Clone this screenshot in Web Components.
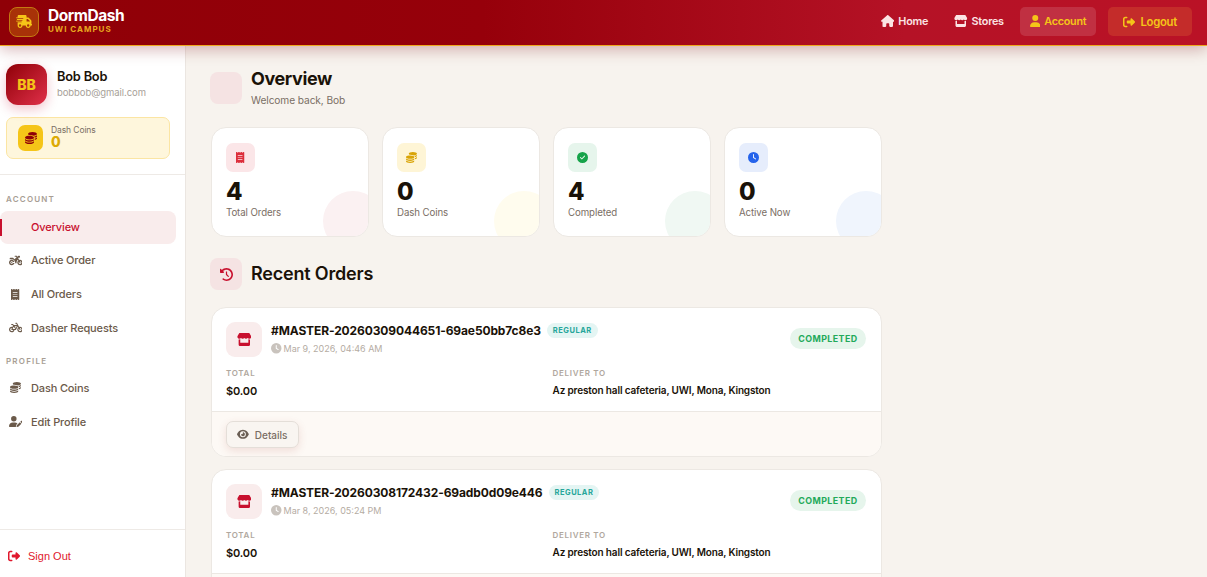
<!DOCTYPE html>
<html lang="en">
<head>
<meta charset="utf-8">
<title>DormDash</title>
<style>
  html, body { margin: 0; height: 100%; overflow: hidden; }
  body { font-family: Inter, "Noto Sans", sans-serif; color: #1a1208; background: #f7f3ee; }
</style>
</head>
<body>
<dd-app></dd-app>
<script>
const ICONS = {
  house: [576, 'M575.8 255.5c0 18-15 32.1-32 32.1h-32l.7 160.2c0 2.7-.2 5.4-.5 8.1V472c0 22.1-17.9 40-40 40H456c-1.1 0-2.2 0-3.3-.1c-1.4 .1-2.8 .1-4.2 .1H416 392c-22.1 0-40-17.9-40-40V448 384c0-17.7-14.3-32-32-32H256c-17.7 0-32 14.3-32 32v64 24c0 22.1-17.9 40-40 40H160 128.1c-1.5 0-3-.1-4.5-.2c-1.2 .1-2.4 .2-3.6 .2H104c-22.1 0-40-17.9-40-40V360c0-.9 0-1.9 .1-2.8V287.6H32c-18 0-32-14-32-32.1c0-9 3-17 10-24L266.4 8c7-7 15-8 22-8s15 2 21 7L564.8 231.5c8 7 12 15 11 24z'],
  store: [576, 'M547.6 103.8L490.3 13.1C485.2 5 476.1 0 466.4 0H109.6C99.9 0 90.8 5 85.7 13.1L28.3 103.8c-29.6 46.8-3.4 111.9 51.9 119.4c4 .5 8.1 .8 12.1 .8c26.1 0 49.3-11.4 65.2-29c15.9 17.6 39.1 29 65.2 29c26.1 0 49.3-11.4 65.2-29c15.9 17.6 39.1 29 65.2 29c26.2 0 49.3-11.4 65.2-29c16 17.6 39.1 29 65.2 29c4.1 0 8.1-.3 12.1-.8c55.5-7.4 81.8-72.5 52.1-119.4zM499.7 254.9l-.1 0c-5.3 .7-10.7 1.1-16.2 1.1c-12.4 0-24.3-1.9-35.4-5.3V384H128V250.6c-11.2 3.5-23.2 5.4-35.6 5.4c-5.5 0-11-.4-16.3-1.1l-.1 0c-4.1-.6-8.1-1.3-12-2.3V384v64c0 35.3 28.7 64 64 64H448c35.3 0 64-28.7 64-64V384 252.6c-4 1-8 1.8-12.3 2.3z'],
  user: [448, 'M224 256A128 128 0 1 0 224 0a128 128 0 1 0 0 256zm-45.7 48C79.8 304 0 383.8 0 482.3C0 498.7 13.3 512 29.7 512H418.3c16.4 0 29.7-13.3 29.7-29.7C448 383.8 368.2 304 269.7 304H178.3z'],
  signout: [512, 'M377.9 105.9L500.7 228.7c7.2 7.2 11.3 17.1 11.3 27.3s-4.1 20.1-11.3 27.3L377.9 406.1c-6.4 6.4-15 9.9-24 9.9c-18.7 0-33.9-15.2-33.9-33.9l0-62.1-128 0c-17.7 0-32-14.3-32-32l0-64c0-17.7 14.3-32 32-32l128 0 0-62.1c0-18.7 15.2-33.9 33.9-33.9c9 0 17.6 3.6 24 9.9zM160 96L96 96c-17.7 0-32 14.3-32 32l0 256c0 17.7 14.3 32 32 32l64 0c17.7 0 32 14.3 32 32s-14.3 32-32 32l-64 0c-53 0-96-43-96-96L0 128C0 75 43 32 96 32l64 0c17.7 0 32 14.3 32 32s-14.3 32-32 32z'],
  coins: [512, 'M512 80c0 18-14.3 34.6-38.4 48c-29.1 16.1-72.5 27.5-122.3 30.9c-3.7-1.8-7.4-3.5-11.3-5C300.6 137.4 248.2 128 192 128c-8.3 0-16.4 .2-24.5 .6l-1.1-.6C142.3 114.6 128 98 128 80c0-44.2 86-80 192-80S512 35.8 512 80zM160.7 161.1c10.2-.7 20.7-1.1 31.3-1.1c62.2 0 117.4 12.3 152.5 31.4C369.3 204.9 384 221.7 384 240c0 4-.7 7.9-2.1 11.7c-4.6 13.2-17 25.3-35 35.5c0 0 0 0 0 0c-.1 .1-.3 .1-.4 .2l0 0 0 0c-.3 .2-.6 .3-.9 .5c-35 19.4-90.8 32-153.6 32c-59.6 0-112.9-11.3-148.2-29.1c-1.9-.9-3.7-1.9-5.5-2.9C14.3 274.6 0 258 0 240c0-34.8 53.4-64.5 128-75.4c10.5-1.5 21.4-2.7 32.7-3.5zM416 240c0-21.9-10.6-39.9-24.1-53.4c28.3-4.4 54.2-11.4 76.2-20.5c16.3-6.8 31.5-15.2 43.9-25.5V176c0 19.3-16.5 37.1-43.8 50.9c-14.6 7.4-32.4 13.7-52.4 18.5c.1-1.8 .2-3.5 .2-5.3zm-32 96c0 18-14.3 34.6-38.4 48c-1.8 1-3.6 1.9-5.5 2.9C304.9 404.7 251.6 416 192 416c-62.8 0-118.6-12.6-153.6-32C14.3 370.6 0 354 0 336V300.6c12.5 10.3 27.6 18.7 43.9 25.5C83.4 342.6 135.8 352 192 352s108.6-9.4 148.1-25.9c7.8-3.2 15.3-6.9 22.4-10.9c6.1-3.4 11.8-7.2 17.2-11.2c1.5-1.1 2.9-2.3 4.3-3.4V304v5.7V336zm32 0V304 278.1c19-4.2 36.5-9.5 52.1-16c16.3-6.8 31.5-15.2 43.9-25.5V272c0 10.5-5 21-14.9 30.9c-16.3 16.3-45 29.7-81 38.4c.1-1.7 .2-3.5 .2-5.3zM192 448c56.2 0 108.6-9.4 148.1-25.9c16.3-6.8 31.5-15.2 43.9-25.5V432c0 44.2-86 80-192 80S0 476.2 0 432V396.6c12.5 10.3 27.6 18.7 43.9 25.5C83.4 438.6 135.8 448 192 448z'],
  receipt: [384, 'M14 2.2C22.5-1.7 32.5-.3 39.6 5.8L80 40.4 120.4 5.8c9-7.7 22.3-7.7 31.2 0L192 40.4 232.4 5.8c9-7.7 22.2-7.7 31.2 0L304 40.4 344.4 5.8c7.1-6.1 17.1-7.5 25.6-3.6s14 12.4 14 21.8V488c0 9.4-5.5 17.9-14 21.8s-18.5 2.5-25.6-3.6L304 471.6l-40.4 34.6c-9 7.7-22.3 7.7-31.2 0L192 471.6l-40.4 34.6c-9 7.7-22.3 7.7-31.2 0L80 471.6 39.6 506.2c-7.1 6.1-17.1 7.5-25.6 3.6S0 497.4 0 488V24C0 14.6 5.5 6.1 14 2.2zM96 144c-8.8 0-16 7.2-16 16s7.2 16 16 16H288c8.8 0 16-7.2 16-16s-7.2-16-16-16H96zM80 352c0 8.8 7.2 16 16 16H288c8.8 0 16-7.2 16-16s-7.2-16-16-16H96c-8.8 0-16 7.2-16 16zM96 240c-8.8 0-16 7.2-16 16s7.2 16 16 16H288c8.8 0 16-7.2 16-16s-7.2-16-16-16H96z'],
  check: [512, 'M256 512A256 256 0 1 0 256 0a256 256 0 1 0 0 512zM369 209L241 337c-9.4 9.4-24.6 9.4-33.9 0l-64-64c-9.4-9.4-9.4-24.6 0-33.9s24.6-9.4 33.9 0l47 47L335 175c9.4-9.4 24.6-9.4 33.9 0s9.4 24.6 0 33.9z'],
  clock: [512, 'M256 0a256 256 0 1 1 0 512A256 256 0 1 1 256 0zM232 120V256c0 8 4 15.5 10.7 20l96 64c11 7.4 25.9 4.4 33.3-6.7s4.4-25.9-6.7-33.3L280 243.2V120c0-13.3-10.7-24-24-24s-24 10.7-24 24z'],
  history: [512, 'M75 75L41 41C25.9 25.9 0 36.6 0 57.9V168c0 13.3 10.7 24 24 24H134.1c21.4 0 32.1-25.9 17-41l-30.8-30.8C155 85.5 203 64 256 64c106 0 192 86 192 192s-86 192-192 192c-40.8 0-78.6-12.7-109.7-34.4c-14.5-10.1-34.4-6.6-44.6 7.9s-6.6 34.4 7.9 44.6C151.2 495 201.7 512 256 512c141.4 0 256-114.6 256-256S397.4 0 256 0C185.3 0 121.3 28.7 75 75zm181 53c-13.3 0-24 10.7-24 24V256c0 6.4 2.5 12.5 7 17l72 72c9.4 9.4 24.6 9.4 33.9 0s9.4-24.6 0-33.9l-65-65V152c0-13.3-10.7-24-24-24z'],
  eye: [576, 'M288 32c-80.8 0-145.5 36.8-192.6 80.6C48.6 156 17.3 208 2.5 243.7c-3.3 7.9-3.3 16.7 0 24.6C17.3 304 48.6 356 95.4 399.4C142.5 443.2 207.2 480 288 480s145.5-36.8 192.6-80.6c46.8-43.5 78.1-95.4 93-131.1c3.3-7.9 3.3-16.7 0-24.6c-14.9-35.7-46.2-87.7-93-131.1C433.5 68.8 368.8 32 288 32zM144 256a144 144 0 1 1 288 0 144 144 0 1 1 -288 0zm144-64c0 35.3-28.7 64-64 64c-7.1 0-13.9-1.2-20.3-3.3c-5.5-1.8-11.9 1.6-11.7 7.4c.3 6.9 1.3 13.8 3.2 20.7c13.7 51.2 66.4 81.6 117.6 67.9s81.6-66.4 67.9-117.6c-11.1-41.5-47.8-69.4-88.6-71.1c-5.8-.2-9.2 6.1-7.4 11.7c2.1 6.4 3.3 13.2 3.3 20.3z'],
  truck: [640, 'M112 0C85.5 0 64 21.5 64 48V96H16c-8.8 0-16 7.2-16 16s7.2 16 16 16H64 272c8.8 0 16 7.2 16 16s-7.2 16-16 16H64 48c-8.8 0-16 7.2-16 16s7.2 16 16 16H64 240c8.8 0 16 7.2 16 16s-7.2 16-16 16H64 16c-8.8 0-16 7.2-16 16s7.2 16 16 16H64 208c8.8 0 16 7.2 16 16s-7.2 16-16 16H64V416c0 53 43 96 96 96s96-43 96-96H384c0 53 43 96 96 96s96-43 96-96h32c17.7 0 32-14.3 32-32s-14.3-32-32-32V288 256 237.3c0-17-6.7-33.3-18.7-45.3L512 114.7c-12-12-28.3-18.7-45.3-18.7H416V48c0-26.5-21.5-48-48-48H112zM544 237.3V256H416V160h50.7L544 237.3zM160 368a48 48 0 1 1 0 96 48 48 0 1 1 0-96zm272 48a48 48 0 1 1 96 0 48 48 0 1 1 -96 0z'],
  motorcycle: [640, 'M280 32c-13.3 0-24 10.7-24 24s10.7 24 24 24h57.7l16.4 30.3L256 192l-45.3-45.3c-12-12-28.3-18.7-45.3-18.7H64c-17.7 0-32 14.3-32 32v32h96c88.4 0 160 71.6 160 160c0 11-1.1 21.7-3.2 32h70.4c-2.1-10.3-3.2-21-3.2-32c0-52.2 25-98.6 63.7-127.8l15.4 28.6C402.4 276.3 384 312 384 352c0 70.7 57.3 128 128 128s128-57.3 128-128s-57.3-128-128-128c-13.5 0-26.5 2.1-38.7 6L418.2 128H480c17.7 0 32-14.3 32-32V64c0-17.7-14.3-32-32-32H459.6c-7.5 0-14.7 2.6-20.5 7.4L391.7 78.9l-14-26c-7-12.9-20.5-21-35.2-21H280zM462.7 311.2l28.2 52.2c6.3 11.7 20.9 16 32.5 9.7s16-20.9 9.7-32.5l-28.2-52.2c2.3-.3 4.7-.4 7.1-.4c35.3 0 64 28.7 64 64s-28.7 64-64 64s-64-28.7-64-64c0-15.5 5.5-29.7 14.7-40.8zM187.3 376c-9.5 23.5-32.5 40-59.3 40c-35.3 0-64-28.7-64-64s28.7-64 64-64c26.9 0 49.9 16.5 59.3 40h66.4C242.5 268.8 190.5 224 128 224C57.3 224 0 281.3 0 352s57.3 128 128 128c62.5 0 114.5-44.8 125.8-104H187.3zM128 384a32 32 0 1 0 0-64 32 32 0 1 0 0 64z'],
  bicycle: [640, 'M312 32c-13.3 0-24 10.7-24 24s10.7 24 24 24h25.7l34.6 64H222.9l-27.4-38C191 99.7 183.7 96 176 96H120c-13.3 0-24 10.7-24 24s10.7 24 24 24h43.7l22.1 30.7-26.6 53.1c-10-2.5-20.5-3.8-31.2-3.8C57.3 224 0 281.3 0 352s57.3 128 128 128c65.3 0 119.1-48.9 127-112h49c8.5 0 16.3-4.5 20.7-11.8l84.8-143.5 21.7 40.1C402.4 276.3 384 312 384 352c0 70.7 57.3 128 128 128s128-57.3 128-128s-57.3-128-128-128c-13.5 0-26.5 2.1-38.7 6L375.4 48.8C369.8 38.4 359 32 347.2 32H312zM458.6 303.7l32.3 59.7c6.3 11.7 20.9 16 32.5 9.7s16-20.9 9.7-32.5l-32.3-59.7c3.6-.6 7.4-.9 11.2-.9c39.8 0 72 32.2 72 72s-32.2 72-72 72s-72-32.2-72-72c0-18.6 7-35.5 18.6-48.3zM133.2 368h65c-7.3 32.1-36 56-70.2 56c-39.8 0-72-32.2-72-72s32.2-72 72-72c1.7 0 3.4 .1 5.1 .2l-24.2 48.5c-9 18.1 4.1 39.4 24.3 39.4zm33.7-48l50.7-101.3 72.9 101.2-.1 .1H166.8zm90.6-128H365.9L317 274.8 257.4 192z'],
  userpen: [640, 'M224 256A128 128 0 1 0 224 0a128 128 0 1 0 0 256zm-45.7 48C79.8 304 0 383.8 0 482.3C0 498.7 13.3 512 29.7 512H322.8c-3.1-8.8-3.7-18.4-1.4-27.8l15-60.1c2.8-11.3 8.6-21.5 16.8-29.7l40.3-40.3c-32.1-31-75.7-50.1-123.9-50.1H178.3zm435.5-68.3c-15.6-15.6-40.9-15.6-56.6 0l-29.4 29.4 71 71 29.4-29.4c15.6-15.6 15.6-40.9 0-56.6l-14.4-14.4zM375.9 417c-4.1 4.1-7 9.2-8.4 14.9l-15 60.1c-1.4 5.5 .2 11.2 4.2 15.2s9.7 5.6 15.2 4.2l60.1-15c5.6-1.4 10.8-4.3 14.9-8.4L576.1 358.7l-71-71L375.9 417z'],
};

// one em high, width follows the glyph like a font icon
class DdIcon extends HTMLElement {
  connectedCallback() {
    const [width, d] = ICONS[this.getAttribute('name')];
    this.attachShadow({ mode: 'open' }).innerHTML = `
      <style>
        :host { display: inline-flex; flex: none; }
        svg { display: block; height: 1em; width: auto; fill: currentColor; }
      </style>
      <svg viewBox="0 0 ${width} 512"><path d="${d}"/></svg>
    `;
  }
}

class DdTopLink extends HTMLElement {
  constructor() {
    super();
    this.attachShadow({ mode: 'open' }).innerHTML = `
      <style>
        :host {
          display: flex;
          align-items: center;
          gap: 4px;
          height: 29px;
          padding: 0 10px 1px;
          box-sizing: border-box;
          border-radius: 5px;
          font-size: 10.8px;
          font-weight: 600;
          letter-spacing: -.25px;
          color: #fbe4e4;
        }
        :host([active]) { background: rgba(255,255,255,.13); color: #f5c518; }
        :host([logout]) {
          background: #c42c2a;
          color: #f5c518;
          padding: 0 15px;
          gap: 5px;
          margin-left: 6px;
          font-size: 11.3px;
        }
        ::slotted(dd-icon) { font-size: 12px; }
      </style>
      <slot></slot>
    `;
  }
}

class DdHeader extends HTMLElement {
  constructor() {
    super();
    this.attachShadow({ mode: 'open' }).innerHTML = `
      <style>
        :host {
          display: flex;
          align-items: center;
          flex: none;
          position: relative;
          z-index: 2;
          box-sizing: border-box;
          height: 46px;
          padding: 0 15px 2px 9px;
          background: linear-gradient(90deg, #8f0007 0%, #96000a 40%, #b51226 75%, #ba1226 100%);
          border-bottom: 1px solid #eeaa20;
          box-shadow: 0 4px 14px rgba(120, 0, 10, .28);
        }
        .logo {
          display: flex;
          align-items: center;
          justify-content: center;
          box-sizing: border-box;
          width: 30px;
          height: 30px;
          border: 1px solid #c47a12;
          border-radius: 8px;
          background: #a83208;
          color: #f5c518;
          font-size: 13px;
        }
        .brand { margin-left: 9px; display: flex; flex-direction: column; margin-top: -1px; }
        .name { font-size: 15.5px; font-weight: 700; color: #fff; line-height: 17px; letter-spacing: -.45px; }
        .campus { font-size: 8px; font-weight: 700; color: #e8a820; line-height: 11px; letter-spacing: 1px; }
        nav { margin-left: auto; display: flex; align-items: center; gap: 6px; }
      </style>
      <div class="logo"><dd-icon name="truck"></dd-icon></div>
      <div class="brand">
        <span class="name">DormDash</span>
        <span class="campus">UWI CAMPUS</span>
      </div>
      <nav><slot></slot></nav>
    `;
  }
}

class DdSideLink extends HTMLElement {
  constructor() {
    super();
    this.attachShadow({ mode: 'open' }).innerHTML = `
      <style>
        :host {
          display: flex;
          align-items: center;
          position: relative;
          box-sizing: border-box;
          height: 33.75px;
          margin-right: 9px;
          padding: 0 0 1px 8px;
          border-radius: 8px;
          font-size: 11px;
          font-weight: 500;
          letter-spacing: -.15px;
          color: #6b5a4a;
        }
        :host([active]) { height: 33px; background: #f9ecec; color: #c8102e; font-weight: 500; }
        :host([active])::before {
          content: "";
          position: absolute;
          left: 0;
          top: 8px;
          width: 2px;
          height: 17px;
          background: #c8102e;
        }
        .icon { width: 15px; margin-right: 8px; display: flex; justify-content: center; font-size: 11px; }
      </style>
      <span class="icon"><slot name="icon"></slot></span>
      <slot></slot>
    `;
  }
}

class DdSidebar extends HTMLElement {
  constructor() {
    super();
    this.attachShadow({ mode: 'open' }).innerHTML = `
      <style>
        :host {
          display: flex;
          flex-direction: column;
          flex: none;
          box-sizing: border-box;
          width: 186px;
          background: #fff;
          border-right: 1px solid #ebe6e1;
        }
        .profile { padding: 18px 15px 15px 6px; border-bottom: 1px solid #eeeae6; }
        .who { display: flex; align-items: center; gap: 10px; }
        .who-text { padding-bottom: 2px; }
        .avatar {
          display: flex;
          align-items: center;
          justify-content: center;
          width: 41px;
          height: 41px;
          border-radius: 12px;
          background: linear-gradient(135deg, #8f0007, #e0304a);
          box-shadow: 0 4px 12px rgba(200, 16, 46, .25);
          color: #f5c518;
          font-size: 14px;
          font-weight: 800;
        }
        .name { font-size: 12.8px; font-weight: 600; line-height: 16px; letter-spacing: -.2px; }
        .mail { font-size: 9.5px; color: #a79f98; line-height: 13px; margin-top: 1px; letter-spacing: -.07px; }
        .coins {
          display: flex;
          align-items: center;
          gap: 8px;
          box-sizing: border-box;
          height: 42px;
          margin-top: 12px;
          padding-left: 11px;
          background: #fef6dc;
          border: 1px solid #fbe5a3;
          border-radius: 7px;
        }
        .coin-text { padding-bottom: 4px; }
        .coin-icon {
          display: flex;
          align-items: center;
          justify-content: center;
          width: 25px;
          height: 26px;
          border-radius: 7px;
          background: #f5c518;
          color: #8f0007;
          font-size: 12px;
        }
        .coin-label { font-size: 8.5px; color: #7a6e64; line-height: 10px; letter-spacing: -.1px; }
        .coin-value { font-size: 14px; font-weight: 800; color: #dcaa06; line-height: 13px; }
        nav { padding: 18px 0 0; }
        .group {
          padding-left: 6px;
          font-size: 8px;
          font-weight: 600;
          letter-spacing: 1.2px;
          color: #a89e94;
          line-height: 12px;
          margin-bottom: 6px;
        }
        .group.second { margin-top: 9.3px; margin-bottom: 5px; }
        .out {
          margin-top: auto;
          box-sizing: border-box;
          height: 48px;
          display: flex;
          align-items: center;
          gap: 8px;
          padding: 4px 0 0 8px;
          border-top: 1px solid #eeeae6;
          font-family: "Liberation Sans", Arial, sans-serif;
          font-size: 11px;
          color: #e0182d;
        }
        .out dd-icon { font-size: 12px; }
      </style>
      <div class="profile">
        <div class="who">
          <div class="avatar">BB</div>
          <div class="who-text">
            <div class="name">Bob Bob</div>
            <div class="mail">bobbob@gmail.com</div>
          </div>
        </div>
        <div class="coins">
          <div class="coin-icon"><dd-icon name="coins"></dd-icon></div>
          <div class="coin-text">
            <div class="coin-label">Dash Coins</div>
            <div class="coin-value">0</div>
          </div>
        </div>
      </div>
      <nav>
        <div class="group">ACCOUNT</div>
        <dd-side-link active><span slot="icon"></span>Overview</dd-side-link>
        <dd-side-link><dd-icon slot="icon" name="motorcycle"></dd-icon>Active Order</dd-side-link>
        <dd-side-link><dd-icon slot="icon" name="receipt"></dd-icon>All Orders</dd-side-link>
        <dd-side-link><dd-icon slot="icon" name="bicycle"></dd-icon>Dasher Requests</dd-side-link>
        <div class="group second">PROFILE</div>
        <dd-side-link><dd-icon slot="icon" name="coins"></dd-icon>Dash Coins</dd-side-link>
        <dd-side-link><dd-icon slot="icon" name="userpen"></dd-icon>Edit Profile</dd-side-link>
      </nav>
      <div class="out"><dd-icon name="signout"></dd-icon>Sign Out</div>
    `;
  }
}

class DdStat extends HTMLElement {
  connectedCallback() {
    const [bg, fg, blob] = this.getAttribute('tone').split(' ');
    this.attachShadow({ mode: 'open' }).innerHTML = `
      <style>
        :host {
          display: block;
          position: relative;
          overflow: hidden;
          box-sizing: border-box;
          height: 110px;
          padding: 15px 14px 0;
          background: #fff;
          border: 1px solid #ece8e3;
          border-radius: 15px;
        }
        .icon {
          display: flex;
          align-items: center;
          justify-content: center;
          width: 29px;
          height: 29px;
          border-radius: 7px;
          font-size: 11px;
          background: ${bg};
          color: ${fg};
        }
        .num { margin-top: 6px; font-size: 24px; font-weight: 800; line-height: 28px; color: #1a1208; }
        .lab { margin-top: 1px; font-size: 9.7px; line-height: 12px; color: #7a6e64; letter-spacing: -.1px; }
        .blob {
          position: absolute;
          right: -15px;
          bottom: -15px;
          width: 60px;
          height: 60px;
          border-radius: 50%;
          background: ${blob};
        }
      </style>
      <div class="blob"></div>
      <div class="icon"><dd-icon name="${this.getAttribute('icon')}"></dd-icon></div>
      <div class="num">${this.getAttribute('value')}</div>
      <div class="lab">${this.getAttribute('label')}</div>
    `;
  }
}

class DdOrder extends HTMLElement {
  connectedCallback() {
    this.attachShadow({ mode: 'open' }).innerHTML = `
      <style>
        :host {
          display: block;
          flex: none;
          overflow: hidden;
          background: #fff;
          border: 1px solid #ece8e3;
          border-radius: 15px;
        }
        .body { padding: 14px 14px 0; height: 89px; }
        .top { display: flex; align-items: flex-start; }
        .store {
          display: flex;
          align-items: center;
          justify-content: center;
          width: 36px;
          height: 35px;
          border-radius: 9px;
          background: #f9ecec;
          color: #c8102e;
          font-size: 13px;
        }
        .head { margin-left: 9px; }
        .line { display: flex; align-items: center; gap: 6px; height: 16px; }
        .id { font-size: 12px; font-weight: 700; letter-spacing: -.12px; white-space: nowrap; }
        .kind {
          padding: 0 6px;
          height: 15px;
          line-height: 15px;
          border-radius: 8px;
          background: #e4f5f3;
          color: #26a69a;
          font-size: 7.5px;
          font-weight: 700;
          letter-spacing: .5px;
        }
        .date {
          display: flex;
          align-items: center;
          gap: 2px;
          margin-top: 4px;
          font-size: 9px;
          line-height: 13px;
          color: #b5aca3;
        }
        .date dd-icon { font-size: 10.5px; color: #c9c3bd; }
        .status {
          margin: 6px 1px 0 auto;
          padding: 0 8.5px;
          height: 21px;
          line-height: 21px;
          border-radius: 11px;
          background: #e6f5ec;
          color: #22a95a;
          font-size: 8.9px;
          font-weight: 700;
          letter-spacing: .4px;
        }
        .grid { display: grid; grid-template-columns: 1fr 1fr; gap: 12px; margin-top: 11px; }
        .cap { font-size: 8px; font-weight: 600; letter-spacing: .7px; color: #b0a79e; line-height: 11px; }
        .val { margin-top: 5px; font-size: 10px; font-weight: 600; line-height: 13px; color: #1a1208; letter-spacing: -.15px; }
        .total { margin-top: 6px; font-size: 11px; }
        .foot {
          height: 45px;
          box-sizing: border-box;
          padding: 9px 14px;
          background: #fdf9f5;
          border-top: 1px solid #ece8e3;
        }
        .btn {
          display: inline-flex;
          align-items: center;
          gap: 6px;
          box-sizing: border-box;
          height: 27px;
          padding: 0 11px 0 10px;
          background: #f9f5f1;
          border: 1px solid #e4ded8;
          border-radius: 7px;
          box-shadow: 0 3px 8px rgba(160, 60, 50, .14);
          color: #7a6e64;
          font-size: 10px;
          font-weight: 500;
        }
        .btn dd-icon { font-size: 10.5px; color: #6b5f55; }
      </style>
      <div class="body">
        <div class="top">
          <div class="store"><dd-icon name="store"></dd-icon></div>
          <div class="head">
            <div class="line">
              <span class="id">${this.getAttribute('order')}</span>
              <span class="kind">REGULAR</span>
            </div>
            <div class="date"><dd-icon name="clock"></dd-icon>${this.getAttribute('date')}</div>
          </div>
          <span class="status">COMPLETED</span>
        </div>
        <div class="grid">
          <div><div class="cap">TOTAL</div><div class="val total">$0.00</div></div>
          <div><div class="cap">DELIVER TO</div><div class="val">Az preston hall cafeteria, UWI, Mona, Kingston</div></div>
        </div>
      </div>
      <div class="foot"><span class="btn"><dd-icon name="eye"></dd-icon>Details</span></div>
    `;
  }
}

class DdHeading extends HTMLElement {
  constructor() {
    super();
    this.attachShadow({ mode: 'open' }).innerHTML = `
      <style>
        :host { display: flex; align-items: center; gap: 9px; flex: none; margin-left: -1px; }
        .box {
          display: flex;
          align-items: center;
          justify-content: center;
          width: 32px;
          height: 32px;
          border-radius: 8px;
          background: #f5e3e3;
          color: #c8102e;
          font-size: 13px;
        }
      </style>
      <div class="box"><slot name="icon"></slot></div>
      <div><slot></slot></div>
    `;
  }
}

class DdApp extends HTMLElement {
  constructor() {
    super();
    this.attachShadow({ mode: 'open' }).innerHTML = `
      <style>
        :host { display: flex; flex-direction: column; height: 100vh; overflow: hidden; }
        .row { display: flex; flex: 1; min-height: 0; }
        main {
          flex: 1;
          min-width: 0;
          display: flex;
          flex-direction: column;
          overflow: hidden;
          padding: 22px 0 0 25px;
          background: #f7f3ee;
        }
        .col { width: 671px; display: flex; flex-direction: column; }
        h1 { margin: 1px 0 0; font-size: 18px; font-weight: 700; line-height: 20px; letter-spacing: -.4px; }
        .sub { margin-top: 5px; font-size: 10.2px; line-height: 13px; color: #7a6e64; letter-spacing: -.1px; }
        .stats { display: grid; grid-template-columns: repeat(4, 158px); gap: 13px; margin-top: 20px; }
        .recent { margin: 21px 0 17px -1px; }
        h2 { margin: 0; font-size: 18px; font-weight: 600; line-height: 20px; letter-spacing: -.2px; }
        .orders { display: flex; flex-direction: column; gap: 12px; }
      </style>
      <dd-header>
        <dd-top-link><dd-icon name="house"></dd-icon>Home</dd-top-link>
        <dd-top-link><dd-icon name="store"></dd-icon>Stores</dd-top-link>
        <dd-top-link active><dd-icon name="user"></dd-icon>Account</dd-top-link>
        <dd-top-link logout><dd-icon name="signout"></dd-icon>Logout</dd-top-link>
      </dd-header>
      <div class="row">
        <dd-sidebar></dd-sidebar>
        <main>
          <div class="col">
            <dd-heading>
              <span slot="icon"></span>
              <h1>Overview</h1>
              <div class="sub">Welcome back, Bob</div>
            </dd-heading>
            <div class="stats">
              <dd-stat icon="receipt" value="4" label="Total Orders" tone="#fbe6e8 #dc2f3c #fbf1f2"></dd-stat>
              <dd-stat icon="coins" value="0" label="Dash Coins" tone="#fef5d6 #d9a406 #fffcee"></dd-stat>
              <dd-stat icon="check" value="4" label="Completed" tone="#e6f5ec #16a34a #f0f8f3"></dd-stat>
              <dd-stat icon="clock" value="0" label="Active Now" tone="#e6edfc #2563eb #f0f5fd"></dd-stat>
            </div>
            <dd-heading class="recent">
              <dd-icon slot="icon" name="history"></dd-icon>
              <h2>Recent Orders</h2>
            </dd-heading>
            <div class="orders">
              <dd-order order="#MASTER-20260309044651-69ae50bb7c8e3" date="Mar 9, 2026, 04:46 AM"></dd-order>
              <dd-order order="#MASTER-20260308172432-69adb0d09e446" date="Mar 8, 2026, 05:24 PM"></dd-order>
            </div>
          </div>
        </main>
      </div>
    `;
  }
}

customElements.define('dd-icon', DdIcon);
customElements.define('dd-top-link', DdTopLink);
customElements.define('dd-header', DdHeader);
customElements.define('dd-side-link', DdSideLink);
customElements.define('dd-sidebar', DdSidebar);
customElements.define('dd-stat', DdStat);
customElements.define('dd-order', DdOrder);
customElements.define('dd-heading', DdHeading);
customElements.define('dd-app', DdApp);
</script>
</body>
</html>
